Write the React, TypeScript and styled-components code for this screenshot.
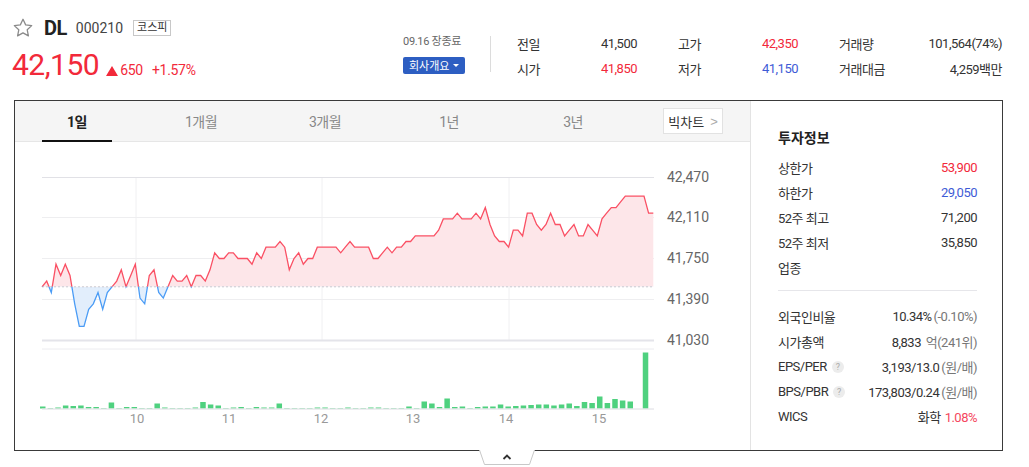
import styled, { createGlobalStyle } from 'styled-components';

const GlobalStyle = createGlobalStyle`
    body {
        margin: 0;
        background: #fff;
        font-family: Roboto, "Noto Sans CJK KR", sans-serif;
        color: #333;
    }
`;

const RED = '#f2293a';
const BLUE = '#3e5bd6';

const Page = styled.div`
    width: 1029px;
    height: 467px;
    overflow: hidden;
`;

const Header = styled.header`
    display: flex;
    height: 100px;
    padding-left: 12px;
`;

const TitleBlock = styled.div`
    width: 391px;
`;

const TitleRow = styled.div`
    display: flex;
    align-items: center;
    margin-top: 16px;
    height: 24px;
`;

const Name = styled.h1`
    margin: 0 0 0 10px;
    font-size: 20px;
    font-weight: 700;
    color: #222;
    letter-spacing: -0.5px;
`;

const Code = styled.span`
    margin-left: 9px;
    font-size: 14px;
    color: #444;
`;

const Badge = styled.span`
    margin-left: 10px;
    border: 1px solid #c8c8c8;
    padding: 0 3px;
    font-size: 11px;
    line-height: 14px;
    color: #333;
`;

const PriceRow = styled.div`
    display: flex;
    align-items: baseline;
    margin-top: 7px;
    color: ${RED};
`;

const Price = styled.strong`
    font-size: 30px;
    font-weight: 400;
    letter-spacing: -0.5px;
`;

const Change = styled.span`
    margin-left: 7px;
    font-size: 14px;
    letter-spacing: -0.3px;
    display: flex;
    align-items: baseline;
    gap: 2px;
`;

const Rate = styled.span`
    margin-left: 9px;
    font-size: 14px;
    letter-spacing: -0.3px;
`;

const UpArrow = styled.span`
    width: 0;
    height: 0;
    border-left: 6px solid transparent;
    border-right: 6px solid transparent;
    border-bottom: 10px solid ${RED};
    align-self: center;
    margin-top: 2px;
`;

const MarketBlock = styled.div`
    width: 87px;
    padding-top: 35px;
    display: flex;
    flex-direction: column;
    align-items: flex-start;
    gap: 9px;
`;

const MarketTime = styled.span`
    font-size: 11px;
    color: #666;
    line-height: 13px;
    letter-spacing: -0.3px;
`;

const CompanyButton = styled.button`
    border: none;
    border-radius: 2px;
    background: #2d5ec2;
    color: #fff;
    font-family: "Noto Sans CJK KR", sans-serif;
    font-size: 11px;
    line-height: 17px;
    height: 17px;
    padding: 0 6px;
    display: flex;
    align-items: center;
    gap: 4px;
    &::after {
        content: '';
        border-left: 3px solid transparent;
        border-right: 3px solid transparent;
        border-top: 3px solid #fff;
    }
`;

const VDivider = styled.div`
    width: 1px;
    height: 36px;
    margin-top: 36px;
    background: #dcdcdc;
`;

const Stats = styled.div`
    margin-left: 26px;
    padding-top: 31px;
    display: grid;
    grid-template-columns: 120px 120px 163px;
    column-gap: 41px;
    grid-auto-rows: 25px;
`;

const StatCell = styled.div`
    display: flex;
    justify-content: space-between;
    align-items: center;
    font-size: 13px;
    letter-spacing: -0.5px;
`;

const StatLabel = styled.span`
    color: #333;
    font-family: "Noto Sans CJK KR", sans-serif;
`;

const Value = styled.span<{ $tone?: 'up' | 'down' }>`
    color: ${({ $tone }) => ($tone === 'up' ? RED : $tone === 'down' ? BLUE : '#333')};
`;

const Box = styled.section`
    margin-left: 14px;
    width: 987px;
    height: 349px;
    border: 1px solid #3a3a3a;
    display: flex;
`;

const ChartSide = styled.div`
    width: 735px;
    border-right: 1px solid #e3e3e3;
    display: flex;
    flex-direction: column;
`;

const TabBar = styled.nav`
    display: flex;
    align-items: center;
    height: 40px;
    background: #f5f5f5;
    border-bottom: 1px solid #e6e6e6;
`;

const Tab = styled.button<{ $active?: boolean }>`
    position: relative;
    width: 124px;
    height: 40px;
    border: none;
    background: transparent;
    font-family: Roboto, "Noto Sans CJK KR", sans-serif;
    font-size: 14px;
    letter-spacing: -0.5px;
    font-weight: ${({ $active }) => ($active ? 700 : 400)};
    color: ${({ $active }) => ($active ? '#222' : '#888')};
    padding: 0;
    &::after {
        content: '';
        display: ${({ $active }) => ($active ? 'block' : 'none')};
        position: absolute;
        left: 27px;
        right: 27px;
        bottom: -1px;
        height: 2px;
        background: #111;
    }
`;

const BigChartButton = styled.button`
    margin-left: auto;
    margin-right: 27px;
    height: 26px;
    width: 60px;
    border: 1px solid #e2e2e2;
    background: #fff;
    font-family: "Noto Sans CJK KR", sans-serif;
    font-size: 13px;
    color: #333;
    display: flex;
    align-items: center;
    justify-content: center;
    gap: 6px;
    padding: 0;
    span {
        color: #aaa;
        font-family: "Liberation Sans", sans-serif;
    }
`;

const InfoPanel = styled.aside`
    flex: 1;
    padding: 26px 25px 0 27px;
`;

const InfoTitle = styled.h2`
    margin: 0 0 8px;
    font-size: 14px;
    line-height: 20px;
    font-weight: 700;
    color: #222;
    font-family: "Noto Sans CJK KR", sans-serif;
`;

const InfoRow = styled.div`
    display: flex;
    justify-content: space-between;
    align-items: center;
    height: 25px;
    font-size: 13px;
    letter-spacing: -0.5px;
`;

const InfoLabel = styled.span`
    display: flex;
    align-items: center;
    gap: 5px;
    color: #333;
    font-family: Roboto, "Noto Sans CJK KR", sans-serif;
`;

const Help = styled.i`
    width: 12px;
    height: 12px;
    border-radius: 50%;
    background: #ececec;
    color: #aaa;
    font-style: normal;
    font-size: 9px;
    line-height: 12px;
    text-align: center;
    letter-spacing: 0;
`;

const Muted = styled.span`
    color: #777;
    margin-left: 2px;
`;

const Rise = styled.span`
    color: #f5475e;
    margin-left: 4px;
`;

const Divider = styled.hr`
    border: none;
    border-top: 1px solid #e6e6ea;
    margin: 10px 0 13px;
`;

const Toggle = styled.div`
    display: flex;
    justify-content: flex-start;
    padding-left: 479px;
    margin-top: -1px;
`;

// chart data: price step = 50원 above 41,500
const ticks = [
    0, 1, -1, 4, 2, 4, 2, -3, -7, -7, -4, -3, -1, -4, -1, 0, 1, 3, 0, 2, 4, -2, -3, 2, 3, -1, -2, 0, 2, 1, 1, 2, 0, 2, 2, 1,
    3, 6, 5, 5, 6, 6, 5, 5, 5, 4, 6, 5, 7, 7, 7, 8, 7, 3, 5, 6, 4, 5, 5, 7, 7, 7, 7, 7, 6, 7, 8, 7, 7, 7, 7, 5, 5, 6, 7, 6,
    7, 7, 8, 8, 9, 9, 9, 9, 9, 10, 12, 12, 12, 13, 12, 12, 12, 13, 12, 14, 11, 9, 8, 8, 7, 10, 10, 9, 13, 13, 11, 10, 11,
    13, 11, 11, 9, 10, 11, 9, 9, 11, 10, 9, 12, 13, 14, 14, 15, 16, 16, 16, 16, 16, 13, 13,
];

const volumes = [
    2, 0.5, 1, 3, 2.5, 3, 1.5, 1.5, 0.5, 6, 0.5, 1.5, 1.5, 0.5, 0.5, 5, 1, 0.5, 0.5, 0.5, 1, 6.5, 4, 3, 0.5, 1, 1.5, 0.5,
    1.5, 1, 1, 5, 0.5, 0.5, 0.5, 0.5, 1, 1, 0.5, 0.5, 1, 0.5, 0.5, 1, 1, 0.5, 0.5, 0.5, 2, 0.5, 7, 5, 1.5, 10, 1.5, 2, 0.5,
    1.5, 2, 2, 4, 2, 2.5, 3, 3.5, 4, 4, 3, 4, 5, 2.5, 6.5, 5.5, 12, 5.5, 9.5, 8, 7, 0, 56,
];

const BASE_Y = 286.8;
const px = (i: number) => 42 + (i * 611.3) / (ticks.length - 1);
const py = (k: number) => BASE_Y - k * 5.66;

const linePoints = ticks.map((k, i) => `${px(i).toFixed(1)},${py(k).toFixed(1)}`).join(' L');
const linePath = `M${linePoints}`;
const areaPath = `M42,${BASE_Y} L${linePoints} L${px(ticks.length - 1).toFixed(1)},${BASE_Y} Z`;

const yLabels = [
    { y: 177, t: '42,470' },
    { y: 217, t: '42,110' },
    { y: 258, t: '41,750' },
    { y: 299, t: '41,390' },
    { y: 340, t: '41,030' },
];

const xLabels = [
    { x: 137, t: '10' },
    { x: 229, t: '11' },
    { x: 321, t: '12' },
    { x: 413, t: '13' },
    { x: 506, t: '14' },
    { x: 599, t: '15' },
];

const PriceChart = () => (
    <svg width={735} height={307} style={{ display: 'block' }}>
        <defs>
            <clipPath id="above">
                <rect x={0} y={0} width={800} height={BASE_Y} />
            </clipPath>
            <clipPath id="below">
                <rect x={0} y={BASE_Y} width={800} height={200} />
            </clipPath>
        </defs>
        <g transform="translate(-15,-142)">
            {[136, 322, 509].map((x) => (
                <line key={x} x1={x} x2={x} y1={177} y2={340} stroke="#f0f0f2" />
            ))}
            <line x1={42} x2={654} y1={177.5} y2={177.5} stroke="#e1e1e6" />
            {[217.5, 258.5, 299.5].map((y) => (
                <line key={y} x1={42} x2={654} y1={y} y2={y} stroke="#eeeef0" />
            ))}
            <path d={areaPath} fill="#fde6e9" clipPath="url(#above)" />
            <path d={areaPath} fill="#e2eefc" clipPath="url(#below)" />
            <line x1={42} x2={654} y1={BASE_Y} y2={BASE_Y} stroke="#c9c9d0" strokeDasharray="2 2" />
            <path d={linePath} fill="none" stroke="#fa5064" strokeWidth={1.3} clipPath="url(#above)" />
            <path d={linePath} fill="none" stroke="#4b9cf5" strokeWidth={1.3} clipPath="url(#below)" />
            <line x1={42} x2={654} y1={340.5} y2={340.5} stroke="#e4e4ea" strokeWidth={2} />
            <line x1={42} x2={654} y1={349} y2={349} stroke="#ececf0" />
            {volumes.map((v, i) => (
                <rect
                    key={i}
                    x={40 + i * 7.63}
                    y={408.5 - v}
                    width={5.5}
                    height={v}
                    fill="#4fd17f"
                />
            ))}
            <line x1={42} x2={654} y1={409} y2={409} stroke="#dcdce2" />
            {yLabels.map((l) => (
                <text key={l.t} x={667} y={l.y + 5} fontSize={14} fill="#666" fontFamily="Roboto, sans-serif">
                    {l.t}
                </text>
            ))}
            {xLabels.map((l) => (
                <text
                    key={l.t}
                    x={l.x}
                    y={423}
                    fontSize={13}
                    fill="#999"
                    textAnchor="middle"
                    fontFamily="Roboto, sans-serif"
                >
                    {l.t}
                </text>
            ))}
        </g>
    </svg>
);

const Star = () => (
    <svg width={22} height={22} viewBox="0 0 24 24">
        <path
            d="M12 2.5l2.9 6.1 6.6.8-4.9 4.6 1.3 6.6L12 17.3l-5.9 3.3 1.3-6.6-4.9-4.6 6.6-.8z"
            fill="none"
            stroke="#8a8a8a"
            strokeWidth={1.4}
            strokeLinejoin="round"
        />
    </svg>
);

const App = () => {
    return (
        <Page>
            <GlobalStyle />
            <Header>
                <TitleBlock>
                    <TitleRow>
                        <Star />
                        <Name>DL</Name>
                        <Code>000210</Code>
                        <Badge>코스피</Badge>
                    </TitleRow>
                    <PriceRow>
                        <Price>42,150</Price>
                        <Change>
                            <UpArrow />
                            650
                        </Change>
                        <Rate>+1.57%</Rate>
                    </PriceRow>
                </TitleBlock>
                <MarketBlock>
                    <MarketTime>09.16 장종료</MarketTime>
                    <CompanyButton>회사개요</CompanyButton>
                </MarketBlock>
                <VDivider />
                <Stats>
                    <StatCell>
                        <StatLabel>전일</StatLabel>
                        <Value>41,500</Value>
                    </StatCell>
                    <StatCell>
                        <StatLabel>고가</StatLabel>
                        <Value $tone="up">42,350</Value>
                    </StatCell>
                    <StatCell>
                        <StatLabel>거래량</StatLabel>
                        <Value>101,564(74%)</Value>
                    </StatCell>
                    <StatCell>
                        <StatLabel>시가</StatLabel>
                        <Value $tone="up">41,850</Value>
                    </StatCell>
                    <StatCell>
                        <StatLabel>저가</StatLabel>
                        <Value $tone="down">41,150</Value>
                    </StatCell>
                    <StatCell>
                        <StatLabel>거래대금</StatLabel>
                        <Value>4,259백만</Value>
                    </StatCell>
                </Stats>
            </Header>
            <Box>
                <ChartSide>
                    <TabBar>
                        <Tab $active>1일</Tab>
                        <Tab>1개월</Tab>
                        <Tab>3개월</Tab>
                        <Tab>1년</Tab>
                        <Tab>3년</Tab>
                        <BigChartButton>
                            빅차트<span>&gt;</span>
                        </BigChartButton>
                    </TabBar>
                    <PriceChart />
                </ChartSide>
                <InfoPanel>
                    <InfoTitle>투자정보</InfoTitle>
                    <InfoRow>
                        <InfoLabel>상한가</InfoLabel>
                        <Value $tone="up">53,900</Value>
                    </InfoRow>
                    <InfoRow>
                        <InfoLabel>하한가</InfoLabel>
                        <Value $tone="down">29,050</Value>
                    </InfoRow>
                    <InfoRow>
                        <InfoLabel>52주 최고</InfoLabel>
                        <Value>71,200</Value>
                    </InfoRow>
                    <InfoRow>
                        <InfoLabel>52주 최저</InfoLabel>
                        <Value>35,850</Value>
                    </InfoRow>
                    <InfoRow>
                        <InfoLabel>업종</InfoLabel>
                    </InfoRow>
                    <Divider />
                    <InfoRow>
                        <InfoLabel>외국인비율</InfoLabel>
                        <Value>
                            10.34%<Muted>(-0.10%)</Muted>
                        </Value>
                    </InfoRow>
                    <InfoRow>
                        <InfoLabel>시가총액</InfoLabel>
                        <Value>
                            8,833 <Muted>억(241위)</Muted>
                        </Value>
                    </InfoRow>
                    <InfoRow>
                        <InfoLabel>
                            EPS/PER<Help>?</Help>
                        </InfoLabel>
                        <Value>
                            3,193/13.0<Muted>(원/배)</Muted>
                        </Value>
                    </InfoRow>
                    <InfoRow>
                        <InfoLabel>
                            BPS/PBR<Help>?</Help>
                        </InfoLabel>
                        <Value>
                            173,803/0.24<Muted>(원/배)</Muted>
                        </Value>
                    </InfoRow>
                    <InfoRow>
                        <InfoLabel>WICS</InfoLabel>
                        <Value>
                            화학<Rise>1.08%</Rise>
                        </Value>
                    </InfoRow>
                </InfoPanel>
            </Box>
            <Toggle>
                <svg width={56} height={15} viewBox="0 0 56 15">
                    <path d="M0.5,0 L5.5,14.5 L50.5,14.5 L55.5,0" fill="#fff" stroke="#c8c8c8" />
                    <path d="M24.5,9 L28,5.5 L31.5,9" fill="none" stroke="#333" strokeWidth={1.8} />
                </svg>
            </Toggle>
        </Page>
    );
};

export default App;
